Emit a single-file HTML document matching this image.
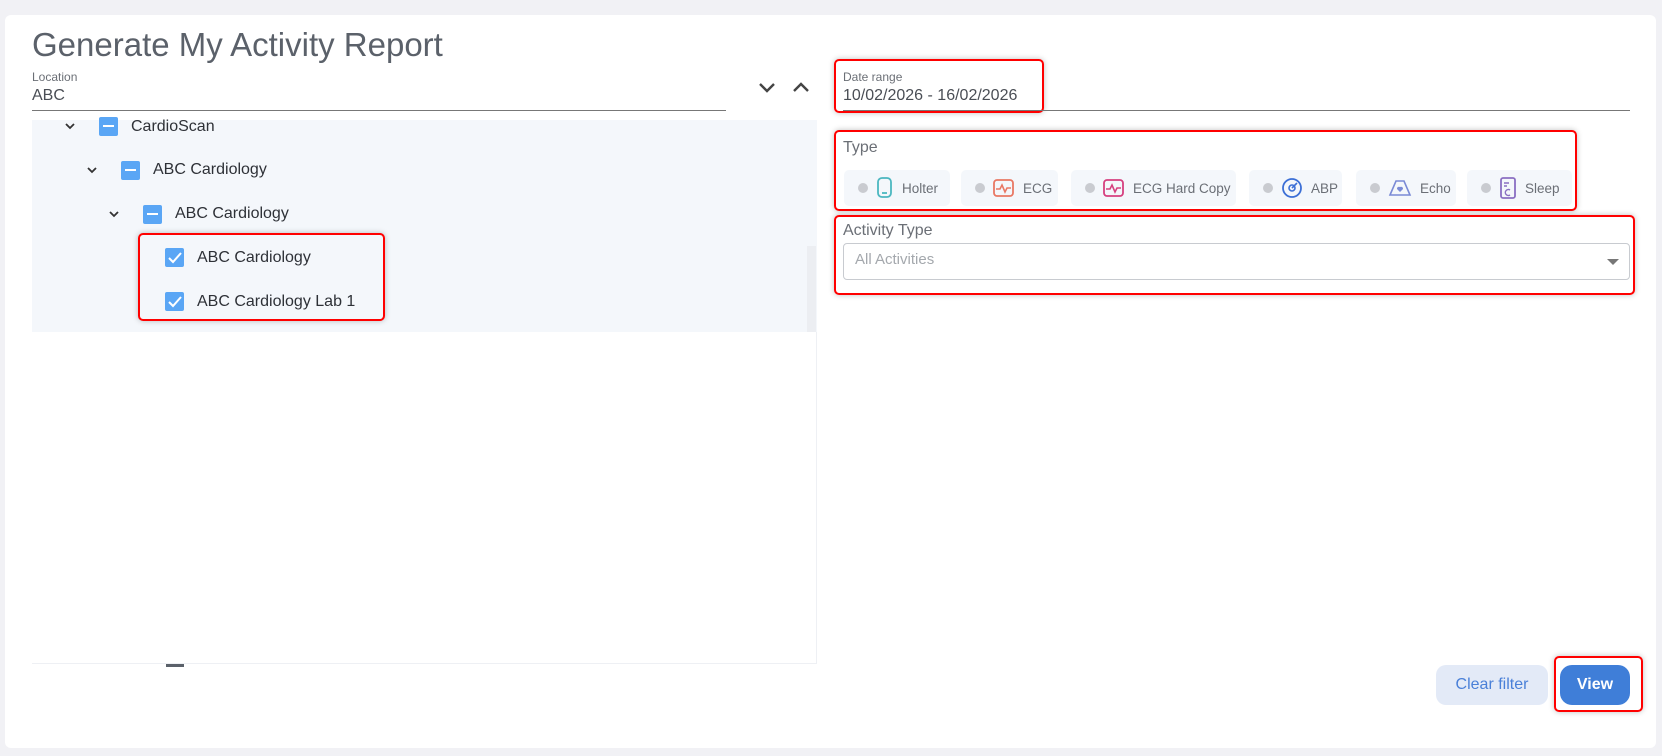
<!DOCTYPE html>
<html><head><meta charset="utf-8"><style>
*{box-sizing:border-box;margin:0;padding:0}
body{width:1662px;height:756px;background:#f1f1f5;font-family:"Liberation Sans",sans-serif;position:relative;overflow:hidden;color:#3c4047}
.a{position:absolute}
.card{left:5px;top:15px;width:1651px;height:733px;background:#fff;border-radius:6px}
.red{border:2px solid #f00;border-radius:5px;box-shadow:0 0 6px rgba(0,0,0,.25)}
.cb{width:19px;height:19px;background:#5aa6f5;border-radius:2px}
.cb.m::after{content:"";position:absolute;left:4px;top:8px;width:11px;height:2px;background:#fff}
.t{font-size:16px;color:#2e3137}
.chip{top:170px;height:36px;background:#f4f7fb;border-radius:5px;font-size:13.5px;color:#6b6f76;display:flex;align-items:center;padding-left:14px;gap:8px}
.dot{width:10px;height:10px;border-radius:50%;background:#c9cbd0}
</style></head><body>
<div class="a card"></div>
<div class="a" style="left:32px;top:26px;font-size:33px;color:#5b616a">Generate My Activity Report</div>
<div class="a" style="left:32px;top:70px;font-size:12px;color:#6b6f76">Location</div>
<div class="a" style="left:32px;top:87px;font-size:16px;color:#4a4e55">ABC</div>
<div class="a" style="left:32px;top:110px;width:694px;height:1px;background:#777"></div>
<svg class="a" style="left:758px;top:80px" width="54" height="16"><path d="M2 4l7 7 7-7" fill="none" stroke="#444" stroke-width="2.4"/><path d="M36 11l7-7 7 7" fill="none" stroke="#444" stroke-width="2.4"/></svg>

<div class="a" style="left:32px;top:120px;width:785px;height:212px;background:#f4f7fb"></div>
<div class="a" style="left:32px;top:332px;width:785px;height:332px;border-right:1px solid #eef0f4;border-bottom:1px solid #eef0f4"></div>
<div class="a" style="left:807px;top:246px;width:9px;height:86px;background:#eceef2"></div>

<svg class="a" style="left:65px;top:122px" width="10" height="8"><path d="M1 2l4 4 4-4" fill="none" stroke="#333" stroke-width="1.8"/></svg>
<div class="a cb m" style="left:99px;top:117px"></div>
<div class="a t" style="left:131px;top:118px">CardioScan</div>

<svg class="a" style="left:87px;top:166px" width="10" height="8"><path d="M1 2l4 4 4-4" fill="none" stroke="#333" stroke-width="1.8"/></svg>
<div class="a cb m" style="left:121px;top:161px"></div>
<div class="a t" style="left:153px;top:161px">ABC Cardiology</div>

<svg class="a" style="left:109px;top:210px" width="10" height="8"><path d="M1 2l4 4 4-4" fill="none" stroke="#333" stroke-width="1.8"/></svg>
<div class="a cb m" style="left:143px;top:205px"></div>
<div class="a t" style="left:175px;top:205px">ABC Cardiology</div>

<div class="a red" style="left:138px;top:233px;width:247px;height:88px"></div>
<svg class="a" style="left:165px;top:248px" width="19" height="19"><rect width="19" height="19" rx="2" fill="#5aa6f5"/><path d="M4 10l4 4 8-9" fill="none" stroke="#fff" stroke-width="2"/></svg>
<div class="a t" style="left:197px;top:249px">ABC Cardiology</div>
<svg class="a" style="left:165px;top:292px" width="19" height="19"><rect width="19" height="19" rx="2" fill="#5aa6f5"/><path d="M4 10l4 4 8-9" fill="none" stroke="#fff" stroke-width="2"/></svg>
<div class="a t" style="left:197px;top:293px">ABC Cardiology Lab 1</div>
<div class="a" style="left:166px;top:664px;width:18px;height:3px;background:#5b616a"></div>

<div class="a red" style="left:834px;top:59px;width:210px;height:54px"></div>
<div class="a" style="left:843px;top:70px;font-size:12px;color:#6b6f76">Date range</div>
<div class="a" style="left:843px;top:87px;font-size:16px;color:#4a4e55">10/02/2026 - 16/02/2026</div>
<div class="a" style="left:843px;top:110px;width:787px;height:1px;background:#777"></div>

<div class="a red" style="left:834px;top:130px;width:743px;height:81px"></div>
<div class="a" style="left:843px;top:139px;font-size:16px;color:#6b6f76">Type</div>
<div class="a chip" style="left:844px;width:106px"><span class="dot"></span><svg width="18" height="22"><rect x="2" y="1" width="13" height="19" rx="4" fill="none" stroke="#4bb7c0" stroke-width="1.8"/><path d="M6 16h5" stroke="#4bb7c0" stroke-width="1.8"/></svg>Holter</div>
<div class="a chip" style="left:961px;width:97px"><span class="dot"></span><svg width="22" height="20"><rect x="1" y="2" width="19" height="16" rx="3" fill="none" stroke="#e97864" stroke-width="1.8"/><path d="M3 11h4l2-4 3 7 2-4h4" fill="none" stroke="#e97864" stroke-width="1.6"/></svg>ECG</div>
<div class="a chip" style="left:1071px;width:165px"><span class="dot"></span><svg width="22" height="20"><rect x="1" y="2" width="19" height="16" rx="3" fill="none" stroke="#d6407f" stroke-width="1.8"/><path d="M3 11h4l2-4 3 7 2-4h4" fill="none" stroke="#d6407f" stroke-width="1.6"/></svg>ECG Hard Copy</div>
<div class="a chip" style="left:1249px;width:93px"><span class="dot"></span><svg width="22" height="22"><circle cx="11" cy="11" r="9" fill="none" stroke="#3c6fd6" stroke-width="1.8"/><circle cx="11" cy="11" r="3" fill="none" stroke="#3c6fd6" stroke-width="1.6"/><path d="M11 11l5-5" stroke="#3c6fd6" stroke-width="1.6"/></svg>ABP</div>
<div class="a chip" style="left:1356px;width:100px"><span class="dot"></span><svg width="24" height="20"><path d="M2 17L8 3h8l6 14z" fill="none" stroke="#7a8ad6" stroke-width="1.6"/><path d="M12 14l-3-3a2 2 0 013-2a2 2 0 013 2z" fill="#7a8ad6"/></svg>Echo</div>
<div class="a chip" style="left:1467px;width:105px"><span class="dot"></span><svg width="18" height="22"><rect x="2" y="1" width="14" height="20" rx="2" fill="none" stroke="#8a6fc2" stroke-width="1.8"/><path d="M5 6h5M5 9h3M11 13a3 3 0 100 5" fill="none" stroke="#8a6fc2" stroke-width="1.4"/></svg>Sleep</div>

<div class="a red" style="left:834px;top:215px;width:801px;height:80px"></div>
<div class="a" style="left:843px;top:222px;font-size:16px;color:#6b6f76">Activity Type</div>
<div class="a" style="left:843px;top:243px;width:787px;height:37px;border:1px solid #c8cbd0;border-radius:4px"></div>
<div class="a" style="left:855px;top:251px;font-size:15px;color:#a4a8ad">All Activities</div>
<div class="a" style="left:1607px;top:259px;width:0;height:0;border-left:6px solid transparent;border-right:6px solid transparent;border-top:6px solid #777"></div>

<div class="a" style="left:1436px;top:665px;width:112px;height:40px;background:#e3eaf7;border-radius:10px;color:#4a80d8;font-size:16px;text-align:center;line-height:40px">Clear filter</div>
<div class="a red" style="left:1554px;top:656px;width:89px;height:56px"></div>
<div class="a" style="left:1560px;top:665px;width:70px;height:40px;background:#3f7ed8;border-radius:12px;color:#fff;font-size:16px;font-weight:bold;text-align:center;line-height:40px">View</div>
</body></html>
